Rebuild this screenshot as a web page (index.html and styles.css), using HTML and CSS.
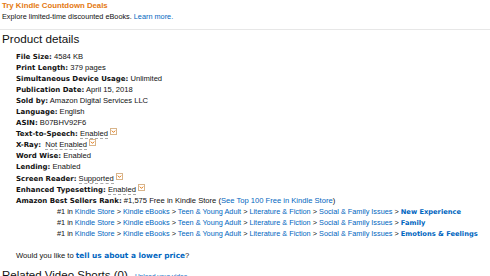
FILE: index.html
```html
<!DOCTYPE html>
<html lang="en">
<head>
    <meta charset="UTF-8">
    <title>Product details</title>
    <link rel="stylesheet" href="styles.css">
</head>
<body>

<!-- Promo strip -->
<div class="promo">
    <div class="promo-title">Try Kindle Countdown Deals</div>
    <div class="promo-text">Explore limited-time discounted eBooks. <a href="#">Learn more.</a></div>
</div>
<hr class="divider">

<h2 class="section-title">Product details</h2>

<ul class="details">
    <li><b>File Size:</b> 4584 KB</li>
    <li><b>Print Length:</b> 379 pages</li>
    <li><b>Simultaneous Device Usage:</b> Unlimited</li>
    <li><b>Publication Date:</b> April 15, 2018</li>
    <li><b>Sold by:</b> Amazon Digital Services LLC</li>
    <li><b>Language:</b> English</li>
    <li><b>ASIN:</b> B07BHV92F6</li>
    <li><b>Text-to-Speech:</b> <span class="feature">Enabled</span><span class="pop"><svg width="7" height="7" viewBox="0 0 7 7"><rect x="0.5" y="0.5" width="6" height="6" fill="#fff" stroke="#d8b48a"/><path d="M1.8 2.6 L3.5 4.4 L5.2 2.6" fill="none" stroke="#e47911" stroke-width="1"/></svg></span></li>
    <li><b>X-Ray:</b> &nbsp;<span class="feature">Not Enabled</span><span class="pop"><svg width="7" height="7" viewBox="0 0 7 7"><rect x="0.5" y="0.5" width="6" height="6" fill="#fff" stroke="#d8b48a"/><path d="M1.8 2.6 L3.5 4.4 L5.2 2.6" fill="none" stroke="#e47911" stroke-width="1"/></svg></span></li>
    <li><b>Word Wise:</b> Enabled</li>
    <li><b>Lending:</b> Enabled</li>
    <li><b>Screen Reader:</b> <span class="feature">Supported</span><span class="pop"><svg width="7" height="7" viewBox="0 0 7 7"><rect x="0.5" y="0.5" width="6" height="6" fill="#fff" stroke="#d8b48a"/><path d="M1.8 2.6 L3.5 4.4 L5.2 2.6" fill="none" stroke="#e47911" stroke-width="1"/></svg></span></li>
    <li><b>Enhanced Typesetting:</b> <span class="feature">Enabled</span><span class="pop"><svg width="7" height="7" viewBox="0 0 7 7"><rect x="0.5" y="0.5" width="6" height="6" fill="#fff" stroke="#d8b48a"/><path d="M1.8 2.6 L3.5 4.4 L5.2 2.6" fill="none" stroke="#e47911" stroke-width="1"/></svg></span></li>
    <li>
        <b>Amazon Best Sellers Rank:</b> #1,575 Free in Kindle Store (<a href="#">See Top 100 Free in Kindle Store</a>)
        <ul class="ranks">
            <li>#1 in <a href="#">Kindle Store</a> &gt; <a href="#">Kindle eBooks</a> &gt; <a href="#">Teen &amp; Young Adult</a> &gt; <a href="#">Literature &amp; Fiction</a> &gt; <a href="#">Social &amp; Family Issues</a> &gt; <a href="#" class="leaf">New Experience</a></li>
            <li>#1 in <a href="#">Kindle Store</a> &gt; <a href="#">Kindle eBooks</a> &gt; <a href="#">Teen &amp; Young Adult</a> &gt; <a href="#">Literature &amp; Fiction</a> &gt; <a href="#">Social &amp; Family Issues</a> &gt; <a href="#" class="leaf">Family</a></li>
            <li>#1 in <a href="#">Kindle Store</a> &gt; <a href="#">Kindle eBooks</a> &gt; <a href="#">Teen &amp; Young Adult</a> &gt; <a href="#">Literature &amp; Fiction</a> &gt; <a href="#">Social &amp; Family Issues</a> &gt; <a href="#" class="leaf">Emotions &amp; Feelings</a></li>
        </ul>
    </li>
</ul>

<div class="lower-price">Would you like to <a href="#">tell us about a lower price</a>?</div>

<h2 class="section-title related">Related Video Shorts (0) <a href="#" class="upload">Upload your video</a></h2>

</body>
</html>
```

FILE: styles.css
```css
* {
    margin: 0;
    padding: 0;
    box-sizing: border-box;
}

body {
    font-family: "Liberation Sans", Arial, sans-serif;
    font-size: 7.6px;
    color: #111;
    background-color: #fff;
    padding-left: 2px;
    overflow: hidden;
}

a {
    color: #0066c0;
    text-decoration: none;
}

/* Promo strip */
.promo-title {
    color: #e47911;
    font-weight: bold;
    font-size: 7.8px;
    line-height: 11px;
}

.promo-text {
    font-size: 7.3px;
    line-height: 12px;
}

.divider {
    border: none;
    border-top: 1px solid #e7e7e7;
    margin: 6px 0 0 -2px;
}

.section-title {
    font-size: 11.7px;
    font-weight: normal;
    line-height: 14px;
    margin-top: 1.5px;
}

/* Detail bullets */
.details {
    list-style: none;
    padding-left: 14px;
    margin-top: 5px;
}

.details li {
    line-height: 11.1px;
    white-space: nowrap;
}

.details b,
.details a,
.details span {
    line-height: 0;
}

.details b {
    font-family: "DejaVu Sans", Verdana, sans-serif;
    font-size: 7px;
}

.feature {
    border-bottom: 1px dashed #aaa;
}

.pop {
    display: inline-block;
    vertical-align: top;
    margin-left: 2px;
    height: 7px;
}

.pop svg {
    display: block;
}

.ranks {
    list-style: none;
    padding-left: 41px;
    font-size: 7.3px;
}

.ranks .leaf {
    font-family: "DejaVu Sans", Verdana, sans-serif;
    font-weight: bold;
    font-size: 6.7px;
}

.lower-price {
    padding-left: 14px;
    margin-top: 11px;
    line-height: 11px;
}

.lower-price a {
    font-family: "DejaVu Sans", Verdana, sans-serif;
    font-weight: bold;
    font-size: 7.4px;
    line-height: 0;
}

.related {
    font-size: 11.5px;
    margin-top: 6.5px;
}

.upload {
    font-size: 6.5px;
    margin-left: 4px;
}
```
